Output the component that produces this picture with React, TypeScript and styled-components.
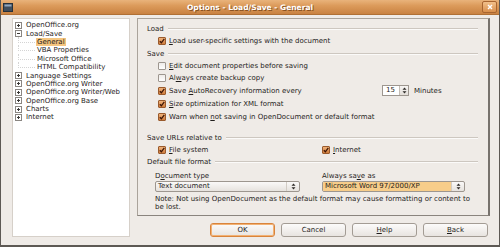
import styled, { createGlobalStyle } from 'styled-components'

const GlobalStyle = createGlobalStyle`
  html, body {
    margin: 0;
    padding: 0;
  }
  body {
    font-family: 'DejaVu Sans', 'Liberation Sans', sans-serif;
    font-size: 7px;
    color: #1f1d1b;
  }
`

const Window = styled.div`
  box-sizing: border-box;
  width: 500px;
  height: 247px;
  background: #efebe7;
  border: 1px solid #5d5954;
  border-top: none;
  border-bottom-width: 2px;
  display: flex;
  flex-direction: column;
`

const TitleBar = styled.div`
  height: 14px;
  display: grid;
  grid-template-columns: 1fr auto 1fr;
  align-items: center;
  padding: 0 2px 0 2px;
  background: linear-gradient(#e9b37b 0%, #dc9b5b 40%, #c98242 100%);
  border-bottom: 1px solid #b07035;
`

const Title = styled.span`
  color: #fff;
  font-weight: bold;
  font-size: 7.5px;
  text-shadow: 1px 1px 0 #8a5220;
  white-space: nowrap;
`

const TitleEnd = styled.div<{ $right?: boolean }>`
  display: flex;
  justify-content: ${(p) => (p.$right ? 'flex-end' : 'flex-start')};
  align-items: center;
`

const CloseButton = styled.div`
  width: 13px;
  height: 10px;
  border: 1px solid #a86530;
  border-radius: 2px;
  background: linear-gradient(#f2c08a, #d98f4c);
  display: flex;
  align-items: center;
  justify-content: center;
`

const Body = styled.div`
  flex: 1;
  display: flex;
  gap: 7px;
  padding: 3px 9px 0 11px;
`

const Tree = styled.div`
  box-sizing: border-box;
  width: 118px;
  height: 219px;
  background: #fff;
  border: 1px solid #d6d0c9;
  padding-top: 2px;
`

const TreeRow = styled.div<{ $child?: boolean }>`
  position: relative;
  display: flex;
  align-items: center;
  height: 8.4px;
  padding-left: ${(p) => (p.$child ? 24 : 2)}px;
  white-space: nowrap;
  ${(p) =>
    p.$child &&
    `
    &::before {
      content: '';
      position: absolute;
      left: 5px;
      top: -1px;
      height: 5.2px;
      width: 16px;
      border-left: 1px dotted #d4d4d4;
      border-bottom: 1px dotted #d4d4d4;
    }
  `}
`

const TreeLabel = styled.span<{ $selected?: boolean }>`
  margin-left: ${(p) => (p.$selected ? -1 : 0)}px;
  padding: 0 ${(p) => (p.$selected ? 1 : 0)}px;
  background: ${(p) => (p.$selected ? '#f5c57f' : 'transparent')};
  line-height: 8px;
`

const Expander = styled.svg`
  width: 7px;
  height: 7px;
  margin-right: 4px;
  flex: none;
`

const Main = styled.div`
  flex: 1;
  display: flex;
  flex-direction: column;
`

const Panel = styled.div`
  box-sizing: border-box;
  height: 198px;
  border: 1px solid #aaa39b;
  border-right: 2px solid #77726d;
  border-bottom-color: #8a847e;
  padding: 4px 10px 0 9px;
`

const Heading = styled.div<{ $top?: number }>`
  display: flex;
  align-items: center;
  height: 12px;
  margin-top: ${(p) => p.$top ?? 0}px;
  white-space: nowrap;
  &::after {
    content: '';
    flex: 1;
    margin-left: 4px;
    border-top: 1px solid #cdc7c0;
    border-bottom: 1px solid #fbfaf9;
  }
`

const Row = styled.div<{ $h?: number }>`
  display: flex;
  align-items: center;
  height: ${(p) => p.$h ?? 12}px;
  padding-left: 11px;
  white-space: nowrap;
`

const Box = styled.span<{ $checked?: boolean }>`
  box-sizing: border-box;
  width: 8px;
  height: 8px;
  margin-right: 3px;
  flex: none;
  border: 1px solid ${(p) => (p.$checked ? '#9a5a2c' : '#9d968f')};
  border-radius: 1px;
  background: ${(p) =>
    p.$checked ? 'linear-gradient(#efb27a, #cf7c3c)' : 'linear-gradient(#eeebe8, #fff)'};
  display: flex;
  align-items: center;
  justify-content: center;
`

const LabelCell = styled.span<{ $w?: number }>`
  width: ${(p) => (p.$w ? `${p.$w}px` : 'auto')};
  flex: none;
`

const Grid = styled.div<{ $first: number; $pad: number; $h: number; $top?: number }>`
  display: grid;
  grid-template-columns: ${(p) => p.$first}px 143px;
  align-items: center;
  height: ${(p) => p.$h}px;
  margin-top: ${(p) => p.$top ?? 0}px;
  padding-left: ${(p) => p.$pad}px;
  white-space: nowrap;
`

const Cell = styled.div`
  display: flex;
  align-items: center;
`

const Spin = styled.div`
  box-sizing: border-box;
  width: 27px;
  height: 11px;
  display: flex;
  border: 1px solid #9d968f;
  background: #fff;
`

const SpinText = styled.span`
  flex: 1;
  padding-left: 3px;
  line-height: 9px;
`

const SpinButtons = styled.div`
  width: 8px;
  border-left: 1px solid #c3bcb4;
  background: linear-gradient(#f7f5f3, #e3ded9);
  display: flex;
  align-items: center;
  justify-content: center;
`

const Unit = styled.span`
  margin-left: 5px;
`

const Combo = styled.div<{ $w: number }>`
  box-sizing: border-box;
  width: ${(p) => p.$w}px;
  height: 11px;
  display: flex;
  border: 1px solid #9d968f;
  border-radius: 2px;
  background: linear-gradient(#faf9f8, #e6e2de);
  overflow: hidden;
`

const ComboText = styled.span<{ $active?: boolean }>`
  flex: 1;
  padding-left: 2px;
  line-height: 9px;
  background: ${(p) => (p.$active ? '#f7cd8a' : 'transparent')};
`

const ComboArrow = styled.div`
  width: 12px;
  border-left: 1px solid #d2ccc5;
  display: flex;
  align-items: center;
  justify-content: center;
`

const Note = styled.p`
  margin: 3px 0 0 8px;
  line-height: 8px;
  white-space: nowrap;
`

const ButtonRow = styled.div`
  display: flex;
  justify-content: flex-end;
  gap: 6px;
  margin-top: 7px;
  padding-right: 2px;
`

const Button = styled.div<{ $default?: boolean }>`
  box-sizing: border-box;
  width: 65px;
  height: 14px;
  display: flex;
  align-items: center;
  justify-content: center;
  border: 1px solid ${(p) => (p.$default ? '#d9843c' : '#a39c94')};
  box-shadow: ${(p) => (p.$default ? 'inset 0 0 0 1px #f2b274' : 'none')};
  border-radius: 3px;
  background: linear-gradient(#fcfbfa, #e8e4e0);
`

const U = styled.span`
  text-decoration: underline;
  text-underline-offset: 1px;
`

function Check({ checked }: { checked?: boolean }) {
  return (
    <Box $checked={checked}>
      {checked && (
        <svg width='6' height='6' viewBox='0 0 6 6'>
          <path d='M0.8 3.2 L2.4 4.8 L5.3 0.8' fill='none' stroke='#3d1606' strokeWidth='1.3' />
        </svg>
      )}
    </Box>
  )
}

function ExpanderIcon({ open }: { open?: boolean }) {
  return (
    <Expander viewBox='0 0 7 7'>
      <rect x='0.5' y='0.5' width='6' height='6' fill='#fff' stroke='#8a8682' strokeWidth='1' />
      <line x1='2' y1='3.5' x2='5' y2='3.5' stroke='#3a3836' strokeWidth='1' />
      {!open && <line x1='3.5' y1='2' x2='3.5' y2='5' stroke='#3a3836' strokeWidth='1' />}
    </Expander>
  )
}

function UpDown() {
  return (
    <svg width='5' height='7' viewBox='0 0 5 7'>
      <path d='M2.5 0.5 L4.5 2.8 L0.5 2.8 Z M2.5 6.5 L4.5 4.2 L0.5 4.2 Z' fill='#2e2b28' />
    </svg>
  )
}

const treeItems: { label: string; child?: boolean; open?: boolean; selected?: boolean }[] = [
  { label: 'OpenOffice.org' },
  { label: 'Load/Save', open: true },
  { label: 'General', child: true, selected: true },
  { label: 'VBA Properties', child: true },
  { label: 'Microsoft Office', child: true },
  { label: 'HTML Compatibility', child: true },
  { label: 'Language Settings' },
  { label: 'OpenOffice.org Writer' },
  { label: 'OpenOffice.org Writer/Web' },
  { label: 'OpenOffice.org Base' },
  { label: 'Charts' },
  { label: 'Internet' },
]

export default function App() {
  return (
    <>
      <GlobalStyle />
      <Window>
        <TitleBar>
          <TitleEnd>
            <svg width='10' height='9' viewBox='0 0 10 9'>
              <rect x='0.5' y='0.5' width='9' height='8' fill='#3f4d5c' stroke='#26303a' />
              <rect x='1.5' y='1.5' width='7' height='2' fill='#8fa6bd' />
            </svg>
          </TitleEnd>
          <Title>Options - Load/Save - General</Title>
          <TitleEnd $right>
            <CloseButton>
              <svg width='6' height='6' viewBox='0 0 6 6'>
                <path d='M1 1 L5 5 M5 1 L1 5' stroke='#fff' strokeWidth='1.4' />
              </svg>
            </CloseButton>
          </TitleEnd>
        </TitleBar>
        <Body>
          <Tree>
            {treeItems.map((item) => (
              <TreeRow key={item.label} $child={item.child}>
                {!item.child && <ExpanderIcon open={item.open} />}
                <TreeLabel $selected={item.selected}>{item.label}</TreeLabel>
              </TreeRow>
            ))}
          </Tree>
          <Main>
            <Panel>
              <Heading>Load</Heading>
              <Row>
                <Check checked />
                <span>
                  <U>L</U>oad user-specific settings with the document
                </span>
              </Row>
              <Heading $top={1}>Save</Heading>
              <Row>
                <Check />
                <span>
                  <U>E</U>dit document properties before saving
                </span>
              </Row>
              <Row>
                <Check />
                <span>
                  Al<U>w</U>ays create backup copy
                </span>
              </Row>
              <Row $h={13}>
                <Check checked />
                <LabelCell $w={213}>
                  Save <U>A</U>utoRecovery information every
                </LabelCell>
                <Spin>
                  <SpinText>15</SpinText>
                  <SpinButtons>
                    <UpDown />
                  </SpinButtons>
                </Spin>
                <Unit>Minutes</Unit>
              </Row>
              <Row $h={13}>
                <Check checked />
                <span>
                  <U>S</U>ize optimization for XML format
                </span>
              </Row>
              <Row $h={13}>
                <Check checked />
                <span>
                  Warn when <U>n</U>ot saving in OpenDocument or default format
                </span>
              </Row>
              <Heading $top={9}>Save URLs relative to</Heading>
              <Grid $first={164} $pad={11} $h={12}>
                <Cell>
                  <Check checked />
                  <span>
                    <U>F</U>ile system
                  </span>
                </Cell>
                <Cell>
                  <Check checked />
                  <span>
                    <U>I</U>nternet
                  </span>
                </Cell>
              </Grid>
              <Heading>Default file format</Heading>
              <Grid $first={167} $pad={8} $h={10} $top={3}>
                <span>
                  D<U>o</U>cument type
                </span>
                <span>
                  Always sa<U>v</U>e as
                </span>
              </Grid>
              <Grid $first={167} $pad={8} $h={11}>
                <Combo $w={145}>
                  <ComboText>Text document</ComboText>
                  <ComboArrow>
                    <UpDown />
                  </ComboArrow>
                </Combo>
                <Combo $w={143}>
                  <ComboText $active>Microsoft Word 97/2000/XP</ComboText>
                  <ComboArrow>
                    <UpDown />
                  </ComboArrow>
                </Combo>
              </Grid>
              <Note>
                Note: Not using OpenDocument as the default format may cause formatting or content to
                <br />
                be lost.
              </Note>
            </Panel>
            <ButtonRow>
              <Button $default>OK</Button>
              <Button>Cancel</Button>
              <Button>
                <U>H</U>elp
              </Button>
              <Button>
                <U>B</U>ack
              </Button>
            </ButtonRow>
          </Main>
        </Body>
      </Window>
    </>
  )
}
